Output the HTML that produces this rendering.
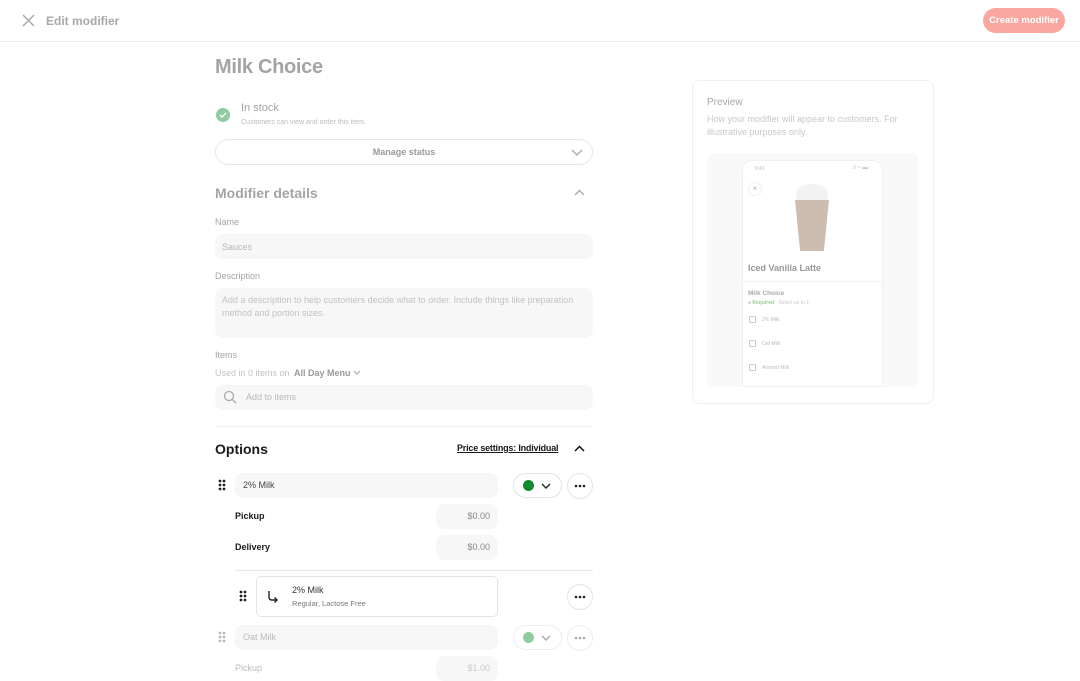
<!DOCTYPE html>
<html><head><meta charset="utf-8"><style>
*{box-sizing:border-box;margin:0;padding:0}
body{width:1080px;height:675px;overflow:hidden;background:#fff;font-family:"Liberation Sans",sans-serif;position:relative;color:#191919}
.a{position:absolute}
.f{background:#f7f7f7;border-radius:8px}
.t{font-size:10px;color:#b8b8b8}
.circ{border:1px solid #e4e4e4;border-radius:50%;width:26px;height:26px;background:#fff}
</style></head><body>
<div class="a" style="left:0;top:41px;width:1080px;height:1px;background:#eee"></div>
<svg class="a" style="left:22px;top:14px" width="13" height="13" viewBox="0 0 13 13"><path d="M1 1L12 12M12 1L1 12" stroke="#aaa" stroke-width="1.5"/></svg>
<div class="a" style="left:46px;top:14px;font-size:12px;font-weight:bold;color:#a8a8a8">Edit modifier</div>
<div class="a" style="left:983px;top:8px;width:82px;height:25px;border-radius:13px;background:#f9a79f;color:#fff;font-size:9.5px;font-weight:bold;text-align:center;line-height:25px">Create modifier</div>

<div class="a" style="left:215px;top:56px;font-size:20px;font-weight:bold;color:#a4a4a4;letter-spacing:-0.3px">Milk Choice</div>
<div class="a" style="left:216px;top:108px;width:14px;height:14px;border-radius:50%;background:#8fcc9f"></div>
<svg class="a" style="left:219px;top:111px" width="8" height="8" viewBox="0 0 8 8"><path d="M1 4L3 6L7 2" stroke="#fff" stroke-width="1.4" fill="none"/></svg>
<div class="a" style="left:241px;top:102px;font-size:11px;color:#a4a4a4">In stock</div>
<div class="a" style="left:241px;top:119px;font-size:7px;color:#bbb">Customers can view and order this item.</div>
<div class="a" style="left:215px;top:139px;width:378px;height:26px;border:1px solid #e8e8e8;border-radius:13px;text-align:center;font-size:9px;font-weight:bold;color:#999;line-height:24px">Manage status</div>
<svg class="a" style="left:571px;top:149px" width="12" height="8" viewBox="0 0 12 8"><path d="M1 1L6 6L11 1" stroke="#aaa" stroke-width="1.4" fill="none"/></svg>

<div class="a" style="left:215px;top:185px;font-size:14px;font-weight:bold;color:#a4a4a4">Modifier details</div>
<svg class="a" style="left:574px;top:189px" width="11" height="7" viewBox="0 0 11 7"><path d="M1 6L5.5 1.5L10 6" stroke="#aaa" stroke-width="1.4" fill="none"/></svg>
<div class="a" style="left:215px;top:217px;font-size:9px;color:#a4a4a4">Name</div>
<div class="a f" style="left:215px;top:234px;width:378px;height:25px"></div>
<div class="a t" style="left:222px;top:242px;font-size:9px">Sauces</div>
<div class="a" style="left:215px;top:271px;font-size:9px;color:#a4a4a4">Description</div>
<div class="a f" style="left:215px;top:288px;width:378px;height:50px"></div>
<div class="a" style="left:222px;top:294px;font-size:9px;color:#c2c2c2;width:360px;line-height:13px">Add a description to help customers decide what to order. Include things like preparation method and portion sizes.</div>
<div class="a" style="left:215px;top:350px;font-size:9px;color:#a4a4a4">Items</div>
<div class="a" style="left:215px;top:368px;font-size:9px;color:#c2c2c2">Used in 0 items on <b style="color:#999;margin-left:2px">All Day Menu</b></div>
<svg class="a" style="left:353px;top:370px" width="8" height="5"><path d="M1 1L4 4L7 1" stroke="#aaa" stroke-width="1.2" fill="none"/></svg>
<div class="a f" style="left:215px;top:385px;width:378px;height:25px"></div>
<svg class="a" style="left:223px;top:390px" width="14" height="14" viewBox="0 0 14 14"><circle cx="6" cy="6" r="4.5" stroke="#aaa" stroke-width="1.3" fill="none"/><path d="M9.3 9.3L13 13" stroke="#aaa" stroke-width="1.3"/></svg>
<div class="a t" style="left:246px;top:392px;font-size:9px">Add to items</div>
<div class="a" style="left:215px;top:426px;width:378px;height:1px;background:#f0f0f0"></div>

<div class="a" style="left:215px;top:441px;font-size:14px;font-weight:bold">Options</div>
<div class="a" style="left:457px;top:443px;font-size:9px;font-weight:bold;text-decoration:underline;letter-spacing:-0.2px">Price settings: Individual</div>
<svg class="a" style="left:574px;top:445px" width="11" height="7" viewBox="0 0 11 7"><path d="M1 6L5.5 1.5L10 6" stroke="#111" stroke-width="1.5" fill="none"/></svg>

<svg class="a" style="left:218px;top:479px" width="8" height="12"><g fill="#222"><circle cx="2" cy="2" r="1.4"/><circle cx="6" cy="2" r="1.4"/><circle cx="2" cy="6" r="1.4"/><circle cx="6" cy="6" r="1.4"/><circle cx="2" cy="10" r="1.4"/><circle cx="6" cy="10" r="1.4"/></g></svg>
<div class="a f" style="left:235px;top:473px;width:263px;height:25px"></div>
<div class="a" style="left:243px;top:480px;font-size:9px;color:#444">2% Milk</div>
<div class="a" style="left:513px;top:473px;width:49px;height:25px;border:1px solid #e4e4e4;border-radius:13px"></div>
<div class="a" style="left:523px;top:480px;width:11px;height:11px;border-radius:50%;background:#0f8a31"></div>
<svg class="a" style="left:541px;top:483px" width="10" height="6"><path d="M1 1L5 5L9 1" stroke="#222" stroke-width="1.4" fill="none"/></svg>
<div class="a circ" style="left:567px;top:473px"></div>
<svg class="a" style="left:574px;top:484px" width="12" height="4"><g fill="#222"><circle cx="2" cy="2" r="1.3"/><circle cx="6" cy="2" r="1.3"/><circle cx="10" cy="2" r="1.3"/></g></svg>
<div class="a" style="left:235px;top:511px;font-size:9px;font-weight:bold">Pickup</div>
<div class="a f" style="left:436px;top:504px;width:62px;height:25px"></div>
<div class="a" style="left:436px;top:511px;width:54px;text-align:right;font-size:9px;color:#888">$0.00</div>
<div class="a" style="left:235px;top:542px;font-size:9px;font-weight:bold">Delivery</div>
<div class="a f" style="left:436px;top:535px;width:62px;height:25px"></div>
<div class="a" style="left:436px;top:542px;width:54px;text-align:right;font-size:9px;color:#888">$0.00</div>
<div class="a" style="left:235px;top:570px;width:358px;height:1px;background:#e6e6e6"></div>

<svg class="a" style="left:239px;top:590px" width="8" height="12"><g fill="#222"><circle cx="2" cy="2" r="1.4"/><circle cx="6" cy="2" r="1.4"/><circle cx="2" cy="6" r="1.4"/><circle cx="6" cy="6" r="1.4"/><circle cx="2" cy="10" r="1.4"/><circle cx="6" cy="10" r="1.4"/></g></svg>
<div class="a" style="left:256px;top:576px;width:242px;height:41px;border:1px solid #e4e4e4;border-radius:5px"></div>
<svg class="a" style="left:267px;top:590px" width="12" height="13"><path d="M2 1V7Q2 10 5 10H10M7.5 7.5L10 10L7.5 12.5" stroke="#222" stroke-width="1.4" fill="none"/></svg>
<div class="a" style="left:292px;top:585px;font-size:9px;color:#333">2% Milk</div>
<div class="a" style="left:292px;top:599px;font-size:7.5px;color:#777">Regular, Lactose Free</div>
<div class="a circ" style="left:567px;top:584px"></div>
<svg class="a" style="left:574px;top:595px" width="12" height="4"><g fill="#222"><circle cx="2" cy="2" r="1.3"/><circle cx="6" cy="2" r="1.3"/><circle cx="10" cy="2" r="1.3"/></g></svg>

<svg class="a" style="left:218px;top:631px" width="8" height="12"><g fill="#bbb"><circle cx="2" cy="2" r="1.4"/><circle cx="6" cy="2" r="1.4"/><circle cx="2" cy="6" r="1.4"/><circle cx="6" cy="6" r="1.4"/><circle cx="2" cy="10" r="1.4"/><circle cx="6" cy="10" r="1.4"/></g></svg>
<div class="a f" style="left:235px;top:625px;width:263px;height:25px"></div>
<div class="a" style="left:243px;top:632px;font-size:9px;color:#bbb">Oat Milk</div>
<div class="a" style="left:513px;top:625px;width:49px;height:25px;border:1px solid #eee;border-radius:13px"></div>
<div class="a" style="left:523px;top:632px;width:11px;height:11px;border-radius:50%;background:#8fcc9f"></div>
<svg class="a" style="left:541px;top:635px" width="10" height="6"><path d="M1 1L5 5L9 1" stroke="#aaa" stroke-width="1.4" fill="none"/></svg>
<div class="a circ" style="left:567px;top:625px;border-color:#eee"></div>
<svg class="a" style="left:574px;top:636px" width="12" height="4"><g fill="#aaa"><circle cx="2" cy="2" r="1.3"/><circle cx="6" cy="2" r="1.3"/><circle cx="10" cy="2" r="1.3"/></g></svg>
<div class="a" style="left:235px;top:663px;font-size:9px;color:#bbb">Pickup</div>
<div class="a f" style="left:436px;top:656px;width:62px;height:25px"></div>
<div class="a" style="left:436px;top:663px;width:54px;text-align:right;font-size:9px;color:#ccc">$1.00</div>

<div class="a" style="left:692px;top:80px;width:242px;height:324px;border:1px solid #f0f0f0;border-radius:8px"></div>
<div class="a" style="left:707px;top:97px;font-size:10px;color:#a8a8a8">Preview</div>
<div class="a" style="left:707px;top:113px;width:210px;font-size:9px;color:#c8c8c8;line-height:13px">How your modifier will appear to customers. For illustrative purposes only.</div>
<div class="a" style="left:707px;top:153px;width:211px;height:234px;background:#f9f9f9;border-radius:6px"></div>
<div class="a" style="left:742px;top:160px;width:141px;height:227px;background:#fff;border:1px solid #f0f0f0;border-radius:10px 10px 0 0"></div>
<div class="a" style="left:755px;top:166px;font-size:5px;color:#bbb">9:41</div>
<div class="a" style="left:851px;top:165px;font-size:6px;color:#ccc">.ıl ≈ ▬</div>
<div class="a" style="left:748px;top:182px;width:14px;height:14px;border-radius:50%;border:1px solid #eee;font-size:8px;text-align:center;line-height:12px;color:#aaa">×</div>
<div class="a" style="left:796px;top:184px;width:32px;height:18px;border-radius:50% 50% 30% 30%;background:#f2f2f2"></div>
<div class="a" style="left:795px;top:200px;width:34px;height:51px;background:#cdbdb0;clip-path:polygon(0 0,100% 0,85% 100%,15% 100%)"></div>
<div class="a" style="left:748px;top:263px;font-size:9px;font-weight:bold;color:#999">Iced Vanilla Latte</div>
<div class="a" style="left:742px;top:281px;width:141px;height:1px;background:#f2f2f2"></div>
<div class="a" style="left:748px;top:290px;font-size:6.5px;font-weight:bold;color:#aaa">Milk Choice</div>
<div class="a" style="left:748px;top:300px;font-size:5px;color:#9c9"><b>● Required</b> <span style="color:#ccc">· Select up to 1</span></div>
<div class="a" style="left:749px;top:316px;width:7px;height:7px;border:1px solid #ccc;border-radius:1px"></div><div class="a" style="left:762px;top:317px;font-size:5px;color:#bbb">2% Milk</div>
<div class="a" style="left:749px;top:340px;width:7px;height:7px;border:1px solid #ccc;border-radius:1px"></div><div class="a" style="left:762px;top:341px;font-size:5px;color:#bbb">Oat Milk</div>
<div class="a" style="left:749px;top:364px;width:7px;height:7px;border:1px solid #ccc;border-radius:1px"></div><div class="a" style="left:762px;top:365px;font-size:5px;color:#bbb">Almond Milk</div>
</body></html>
